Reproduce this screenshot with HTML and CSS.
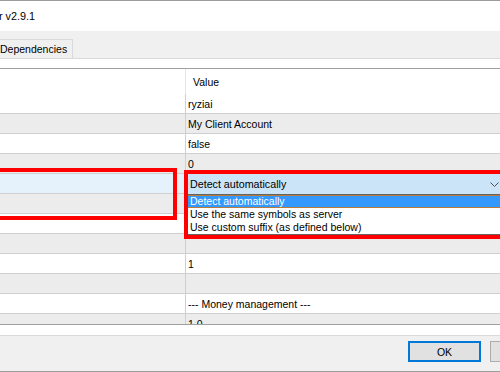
FILE: index.html
```html
<!DOCTYPE html>
<html lang="en">
<head>
    <meta charset="UTF-8">
    <meta name="viewport" content="width=device-width, initial-scale=1.0">
    <title>Expert properties</title>
    <link rel="stylesheet" href="styles.css">
</head>
<body>

<div class="window">
    <div class="titlebar">r v2.9.1</div>

    <div class="tabs">
        <div class="tab">Dependencies</div>
    </div>

    <div class="page">
        <div class="grid">
            <div class="grid-head">
                <div class="cell name"></div>
                <div class="cell value">Value</div>
            </div>
            <div class="row"><div class="cell name"></div><div class="cell value">ryziai</div></div>
            <div class="row"><div class="cell name"></div><div class="cell value">My Client Account</div></div>
            <div class="row"><div class="cell name"></div><div class="cell value">false</div></div>
            <div class="row"><div class="cell name"></div><div class="cell value">0</div></div>
            <div class="row selected">
                <div class="cell name"></div>
                <div class="cell value editing">
                    <div class="combo">
                        <span>Detect automatically</span>
                        <svg class="chevron" width="9" height="5" viewBox="0 0 9 5">
                            <polyline points="0.5,0.5 4.5,4.5 8.5,0.5" fill="none" stroke="#505050" stroke-width="1"/>
                        </svg>
                    </div>
                    <!-- liste ouverte du combo -->
                    <ul class="dropdown">
                        <li class="current">Detect automatically</li>
                        <li>Use the same symbols as server</li>
                        <li>Use custom suffix (as defined below)</li>
                    </ul>
                </div>
            </div>
            <div class="row"><div class="cell name"></div><div class="cell value"></div></div>
            <div class="row"><div class="cell name"></div><div class="cell value"></div></div>
            <div class="row"><div class="cell name"></div><div class="cell value"></div></div>
            <div class="row"><div class="cell name"></div><div class="cell value">1</div></div>
            <div class="row"><div class="cell name"></div><div class="cell value"></div></div>
            <div class="row"><div class="cell name"></div><div class="cell value">--- Money management ---</div></div>
            <div class="row"><div class="cell name"></div><div class="cell value">1.0</div></div>
        </div>
    </div>

    <div class="footer">
        <button class="btn default">OK</button>
        <button class="btn">Cancel</button>
    </div>

    <!-- cadres rouges d'annotation -->
    <div class="mark mark-left"></div>
    <div class="mark mark-right"></div>
</div>

</body>
</html>
```

FILE: styles.css
```css
body {
    margin: 0;
    width: 500px;
    height: 372px;
    overflow: hidden;
    font-family: "Liberation Sans", Arial, sans-serif;
    font-size: 10.5px;
    color: #000;
    background-color: #fff;
}
.window {
    position: relative;
    height: 370px;
    border-top: 1px solid #9c9c9c;
    border-bottom: 1px solid #9c9c9c;
    overflow: hidden;
}
.titlebar {
    height: 30px;
    line-height: 30px;
    margin-left: -1px;
    font-size: 10.8px;
    background-color: #fff;
}
.tabs {
    height: 19px;
    padding-top: 8px;
    background-color: #f0f0f0;
    display: flex;
}
.tab {
    margin-left: -6px;
    padding: 0 5px;
    line-height: 19px;
    border: 1px solid #d9d9d9;
    border-bottom: none;
    background-color: #f0f0f0;
}
.page {
    border-top: 1px solid #d9d9d9;
    border-bottom: 1px solid #d9d9d9;
    padding: 9px 0 10px;
    background-color: #fff;
}
.grid {
    height: 255px;
    border-top: 1px solid #a0a0a0;
    border-bottom: 1px solid #a0a0a0;
    overflow: hidden;
}
.grid-head {
    display: flex;
    height: 25px;
}
.grid-head .name {
    border-right: 1px solid #e5e5e5;
}
.grid-head .value {
    padding-left: 7px;
}
.row {
    display: flex;
    height: 20px;
}
.row:nth-child(odd) {
    background-color: #ececec;
}
.cell {
    box-sizing: border-box;
    padding-top: 1px;
    line-height: 18px;
    border-bottom: 1px solid #cfcfcf;
    white-space: nowrap;
}
.grid-head .cell {
    border-bottom: none;
    padding-top: 1px;
    line-height: 25px;
}
.name {
    width: 186px;
    flex-shrink: 0;
    border-right: 1px solid #cfcfcf;
}
.value {
    flex: 1;
    padding-left: 2px;
}
.selected .name {
    background-color: #e5f1fb;
}
.value.editing {
    position: relative;
    padding: 0;
    border-bottom: none;
}
.combo {
    height: 20px;
    display: flex;
    align-items: center;
    justify-content: space-between;
    padding-left: 4px;
    background-color: #cce4f7;
    font-size: 10.7px;
}
.chevron {
    margin-right: 1px;
    margin-top: 1px;
}
.dropdown {
    position: absolute;
    top: 20px;
    left: 0;
    width: 330px;
    margin: 0;
    padding: 0;
    list-style: none;
    background-color: #fff;
    border: 1px solid #646464;
    z-index: 2;
}
.dropdown li {
    height: 13px;
    line-height: 13px;
    padding-left: 3px;
}
.dropdown li.current {
    background-color: #3399ff;
    color: #fff;
    height: 11px;
    line-height: 11px;
    border-top: 1px dotted #b97b3a;
    border-bottom: 1px dotted #b97b3a;
}
.footer {
    height: 35px;
    background-color: #f0f0f0;
    display: flex;
    gap: 9px;
    padding-left: 408px;
    padding-top: 5px;
    box-sizing: border-box;
}
.btn {
    flex-shrink: 0;
    width: 73px;
    height: 21px;
    padding: 0;
    font-family: "Liberation Sans", Arial, sans-serif;
    font-size: 10.5px;
    color: #000;
    background-color: #e1e1e1;
    border: 1px solid #adadad;
}
.btn.default {
    border: 2px solid #0078d7;
}
.mark {
    position: absolute;
    box-sizing: border-box;
    border: 4px solid #ff0000;
    z-index: 3;
}
.mark-left {
    left: -10px;
    top: 167px;
    width: 187px;
    height: 52px;
}
.mark-right {
    left: 184px;
    top: 169px;
    width: 330px;
    height: 69px;
}
```
